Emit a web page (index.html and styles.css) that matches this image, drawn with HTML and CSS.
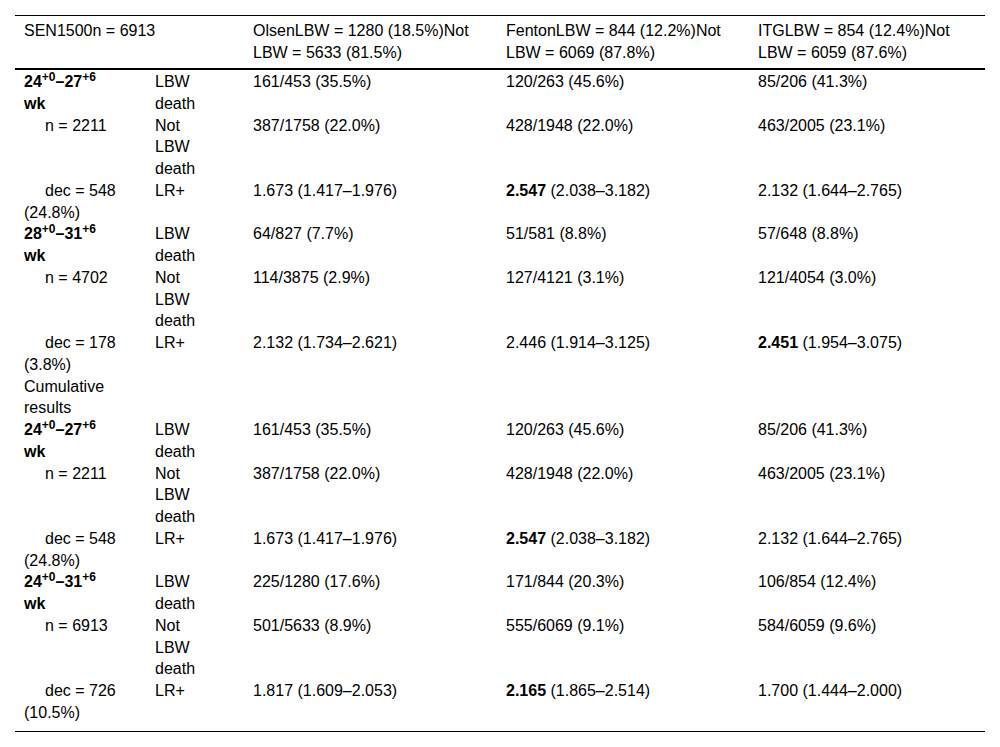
FILE: index.html
```html
<!DOCTYPE html>
<html lang="en">
<head>
<meta charset="utf-8">
<title>SEN1500 table</title>
<link rel="stylesheet" href="styles.css">
</head>
<body>
<table class="data">
  <colgroup>
    <col class="w1"><col class="w2"><col class="w3"><col class="w4"><col class="w5">
  </colgroup>
  <thead>
    <tr>
      <th colspan="2">SEN1500n = 6913</th>
      <th>OlsenLBW = 1280 (18.5%)Not LBW = 5633 (81.5%)</th>
      <th>FentonLBW = 844 (12.2%)Not LBW = 6069 (87.8%)</th>
      <th>ITGLBW = 854 (12.4%)Not LBW = 6059 (87.6%)</th>
    </tr>
  </thead>
  <tbody>
    <tr class="first">
      <td class="grp">24<sup>+0</sup>–27<sup>+6</sup> wk</td>
      <td class="lbl">LBW death</td>
      <td>161/453 (35.5%)</td>
      <td>120/263 (45.6%)</td>
      <td>85/206 (41.3%)</td>
    </tr>
    <tr>
      <td class="ind">n = 2211</td>
      <td class="lbl">Not LBW death</td>
      <td>387/1758 (22.0%)</td>
      <td>428/1948 (22.0%)</td>
      <td>463/2005 (23.1%)</td>
    </tr>
    <tr>
      <td class="ind">dec = 548 (24.8%)</td>
      <td class="lbl">LR+</td>
      <td>1.673 (1.417–1.976)</td>
      <td><b>2.547</b> (2.038–3.182)</td>
      <td>2.132 (1.644–2.765)</td>
    </tr>
    <tr>
      <td class="grp">28<sup>+0</sup>–31<sup>+6</sup> wk</td>
      <td class="lbl">LBW death</td>
      <td>64/827 (7.7%)</td>
      <td>51/581 (8.8%)</td>
      <td>57/648 (8.8%)</td>
    </tr>
    <tr>
      <td class="ind">n = 4702</td>
      <td class="lbl">Not LBW death</td>
      <td>114/3875 (2.9%)</td>
      <td>127/4121 (3.1%)</td>
      <td>121/4054 (3.0%)</td>
    </tr>
    <tr>
      <td class="ind">dec = 178 (3.8%)</td>
      <td class="lbl">LR+</td>
      <td>2.132 (1.734–2.621)</td>
      <td>2.446 (1.914–3.125)</td>
      <td><b>2.451</b> (1.954–3.075)</td>
    </tr>
    <tr>
      <td>Cumulative results</td>
      <td class="lbl"></td>
      <td></td>
      <td></td>
      <td></td>
    </tr>
    <tr>
      <td class="grp">24<sup>+0</sup>–27<sup>+6</sup> wk</td>
      <td class="lbl">LBW death</td>
      <td>161/453 (35.5%)</td>
      <td>120/263 (45.6%)</td>
      <td>85/206 (41.3%)</td>
    </tr>
    <tr>
      <td class="ind">n = 2211</td>
      <td class="lbl">Not LBW death</td>
      <td>387/1758 (22.0%)</td>
      <td>428/1948 (22.0%)</td>
      <td>463/2005 (23.1%)</td>
    </tr>
    <tr>
      <td class="ind">dec = 548 (24.8%)</td>
      <td class="lbl">LR+</td>
      <td>1.673 (1.417–1.976)</td>
      <td><b>2.547</b> (2.038–3.182)</td>
      <td>2.132 (1.644–2.765)</td>
    </tr>
    <tr>
      <td class="grp">24<sup>+0</sup>–31<sup>+6</sup> wk</td>
      <td class="lbl">LBW death</td>
      <td>225/1280 (17.6%)</td>
      <td>171/844 (20.3%)</td>
      <td>106/854 (12.4%)</td>
    </tr>
    <tr>
      <td class="ind">n = 6913</td>
      <td class="lbl">Not LBW death</td>
      <td>501/5633 (8.9%)</td>
      <td>555/6069 (9.1%)</td>
      <td>584/6059 (9.6%)</td>
    </tr>
    <tr class="last">
      <td class="ind">dec = 726 (10.5%)</td>
      <td class="lbl">LR+</td>
      <td>1.817 (1.609–2.053)</td>
      <td><b>2.165</b> (1.865–2.514)</td>
      <td>1.700 (1.444–2.000)</td>
    </tr>
  </tbody>
</table>
</body>
</html>
```
FILE: styles.css
```css
html, body {
  margin: 0;
  padding: 0;
  background: #fff;
}

body {
  padding: 15px;
  font-family: "Liberation Sans", Arial, sans-serif;
  font-size: 16px;
  line-height: 21.75px;
  color: #000;
}

.data {
  width: 970px;
  table-layout: fixed;
  border-collapse: collapse;
  border-top: 1px solid #000;
  border-bottom: 1px solid #000;
}

.w1 { width: 131px; }
.w2 { width: 98px; }
.w3 { width: 253px; }
.w4 { width: 252px; }
.w5 { width: 236px; }

.data th {
  font-weight: normal;
  text-align: left;
  vertical-align: top;
  padding: 4px 8px 4px 9px;
  border-bottom: 2px solid #000;
}

.data td {
  text-align: left;
  vertical-align: top;
  padding: 0 8px 0 9px;
}

.data td:first-child {
  padding-right: 28px;
}

.data td.lbl {
  padding-right: 37px;
}

.data td.grp {
  font-weight: bold;
}

.data td.ind {
  text-indent: 21px;
}

.data sup {
  font-size: 75%;
  line-height: 0;
}

.data b {
  font-weight: bold;
}

.data tr.first td {
  padding-top: 1.5px;
}

.data tr.last td {
  padding-bottom: 7px;
}
```
